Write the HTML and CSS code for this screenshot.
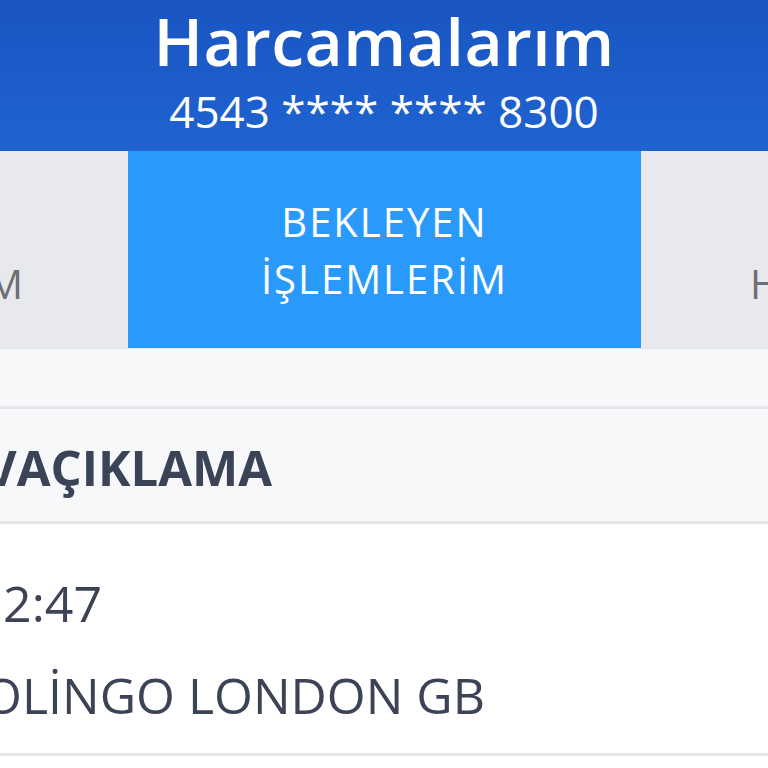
FILE: index.html
```html
<!DOCTYPE html>
<html lang="tr">
<head>
    <meta charset="UTF-8" />
    <meta name="viewport" content="width=device-width, initial-scale=1.0" />
    <title>Harcamalarım</title>
    <link rel="stylesheet" href="styles.css">
</head>
<body>
    <div class="screen">
        <header class="top-bar">
            <h1>Harcamalarım</h1>
            <p class="card-no">4543 **** **** 8300</p>
        </header>

        <nav class="tabs">
            <div class="tab tab-left"><span>İŞLEMLERİM</span></div>
            <div class="tab active"><span>BEKLEYEN<br>İŞLEMLERİM</span></div>
            <div class="tab tab-right"><span>HESAP</span></div>
        </nav>

        <div class="spacer"></div>

        <div class="table-head">
            <span>TARİH VAÇIKLAMA</span>
        </div>

        <div class="row">
            <div class="row-date">19.04.2019 12:47</div>
            <div class="row-desc">DUOLİNGO LONDON GB</div>
        </div>
    </div>
</body>
</html>
```

FILE: styles.css
```css
* {
    margin: 0;
    padding: 0;
    box-sizing: border-box;
    font-family: 'Open Sans', 'Noto Sans', sans-serif;
}

body {
    background: #fff;
    width: 768px;
    height: 768px;
    overflow: hidden;
}

.screen {
    width: 768px;
    overflow: hidden;
}

.top-bar {
    height: 151px;
    background: linear-gradient(180deg, #1955c1, #1f63d1);
    color: #fff;
    text-align: center;
}

.top-bar h1 {
    font-size: 66px;
    font-weight: 600;
    line-height: 80px;
    letter-spacing: 0.5px;
}

.card-no {
    font-size: 44px;
    font-weight: 400;
    line-height: 58px;
    margin-top: 2px;
}

.tabs {
    display: grid;
    grid-template-columns: 128px 513px 127px;
    height: 198px;
    border-bottom: 1px solid #e2e5ea;
}

.tab {
    background: #e8e9ed;
    color: #6e6f74;
    font-size: 40px;
    font-weight: 400;
    line-height: 57px;
    letter-spacing: 2px;
    display: flex;
    align-items: center;
    justify-content: center;
    text-align: center;
    overflow: hidden;
    white-space: nowrap;
    padding-top: 68px;
}

.tab-left {
    justify-content: flex-end;
    padding-right: 103px;
}

.tab-right {
    justify-content: flex-start;
    padding-left: 109px;
}

.tab.active {
    background: #2999fa;
    color: #fff;
    padding-top: 0;
}

.spacer {
    height: 60px;
    background: #f7f8fa;
    border-bottom: 3px solid #e4e6ea;
}

.table-head {
    height: 115px;
    background: #f7f8fa;
    border-bottom: 3px solid #e4e6ea;
    display: flex;
    align-items: center;
    justify-content: flex-end;
    width: 768px;
    overflow: hidden;
    white-space: nowrap;
    padding-top: 4px;
}

.table-head span {
    font-size: 49px;
    font-weight: 700;
    color: #3b4357;
    margin-right: 496px;
}

.row {
    height: 232px;
    border-bottom: 3px solid #e4e6ea;
    display: flex;
    flex-direction: column;
    align-items: flex-end;
    overflow: hidden;
    white-space: nowrap;
    padding-top: 33px;
    color: #3d4356;
    font-size: 50px;
    line-height: 92px;
}

.row-date {
    margin-right: 666px;
}

.row-desc {
    margin-right: 283px;
}
```
